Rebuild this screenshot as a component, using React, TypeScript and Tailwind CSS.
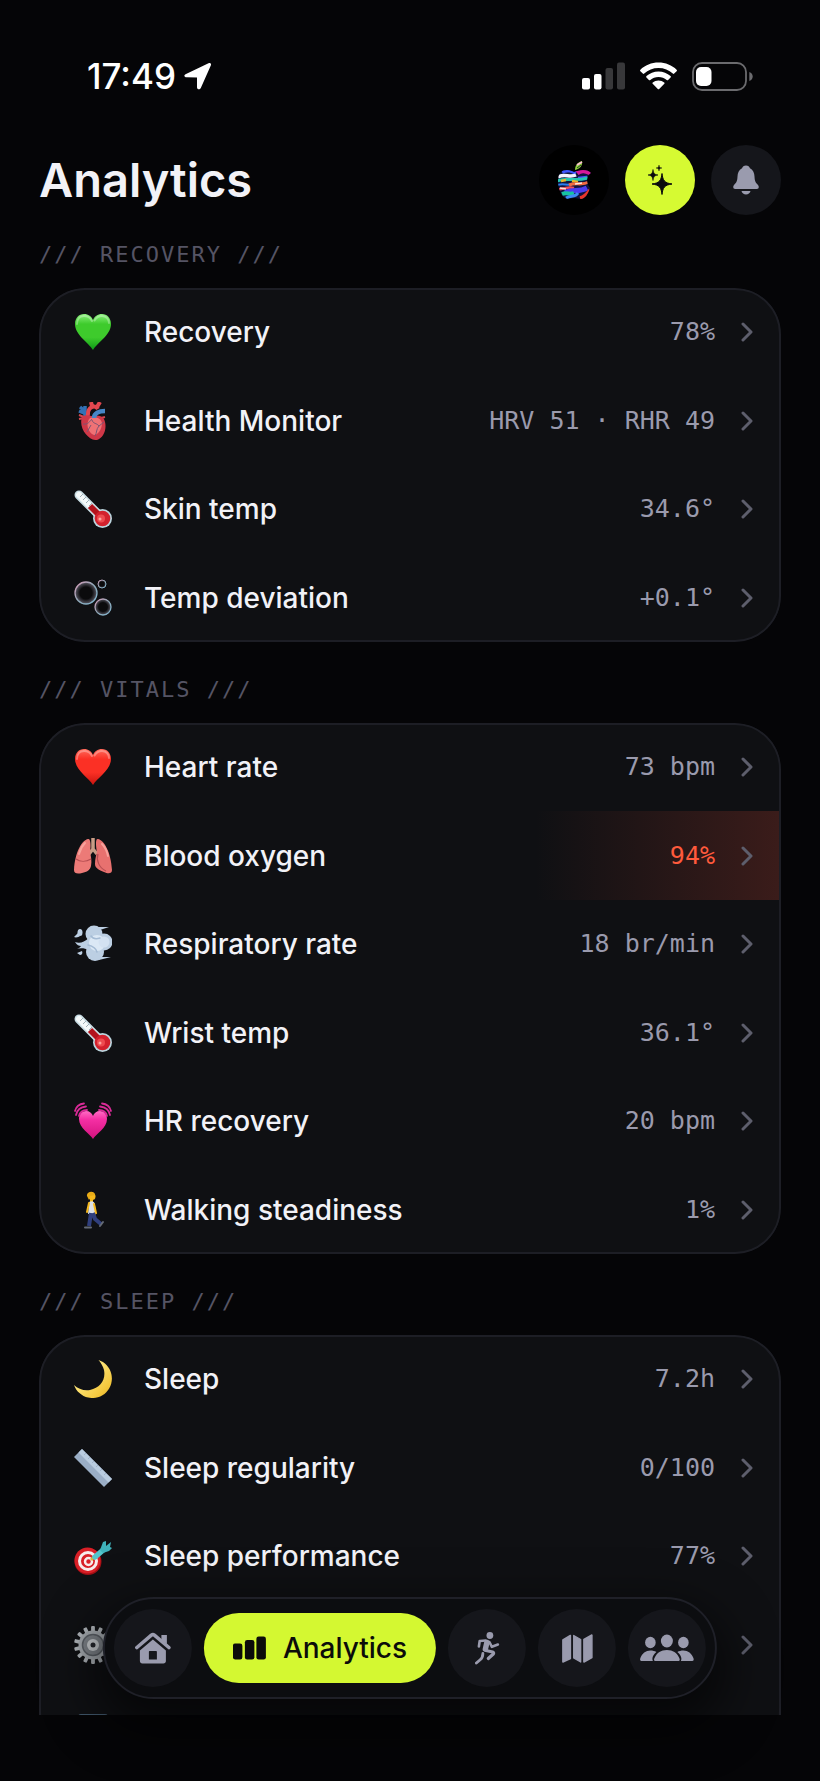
import type { ReactNode } from "react";

interface Metric {
  icon: ReactNode;
  label?: string;
  value?: string;
  alert?: boolean;
}

interface Section {
  title: string;
  metrics: Metric[];
}

const HEART =
  "M19 37C15 30 1 22 1 11C1 5 5 1 10 1c4.500 0 7.500 2.500 9 6c1.500-3.500 4.500-6 9-6c5 0 9 4 9 10c0 11-14 19-18 26z";

function Glyph({ children }: { children: ReactNode }) {
  return (
    <svg viewBox="0 0 38 38" className="size-[38px] shrink-0" aria-hidden="true">
      {children}
    </svg>
  );
}

function HeartIcon({ id, top, mid, low }: { id: string; top: string; mid: string; low: string }) {
  return (
    <Glyph>
      <defs>
        <linearGradient id={id} x1="0" y1="0" x2="0" y2="1">
          <stop offset="0" stopColor={top} />
          <stop offset="0.28" stopColor={mid} />
          <stop offset="0.65" stopColor={mid} />
          <stop offset="1" stopColor={low} />
        </linearGradient>
      </defs>
      <path d={HEART} fill={`url(#${id})`} />
      <path d="M3 11C3 6 6 3 10 3c4 0 6.500 2 8 5" fill="none" stroke="#fff" strokeOpacity="0.3" strokeWidth="2" strokeLinecap="round" />
      <path d="M20.500 7.500C22 5 24.500 3 28 3c4 0 7 3 7 7" fill="none" stroke="#fff" strokeOpacity="0.3" strokeWidth="2" strokeLinecap="round" />
    </Glyph>
  );
}

function AnatomicalHeart() {
  return (
    <Glyph>
      <path d="M11 14V4M6 5l5 4M5 9l5 2" stroke="#3271b5" strokeWidth="3.500" fill="none" />
      <path d="M17 0l1 4M26 0l-3 5M14 14c-1-9 7-12 10-7" stroke="#e2474f" strokeWidth="4" fill="none" />
      <path d="M5 13l5 2M5 17l5-1M31 15l-4 1" stroke="#d5474f" strokeWidth="2" />
      <path d="M8 15c4-4 9 0 12-1c5-1 10 0 11 6c2 8-2 16-8 18C15 39 4 26 8 15z" fill="#cf3848" />
      <path d="M16 16c5-2 11 0 12 5c0 6-4 12-8 12c-6-2-9-12-4-17z" fill="#ef7275" />
      <path d="M20 16c0-5 5-7 11-7" stroke="#4586c6" strokeWidth="4.500" fill="none" />
      <path d="M9 22c5 1 7-3 9-5M18 18c1 4 5 3 7 6M25 24c-3 3-2 7-4 10M25 24l5-4M17 23l-4 7" stroke="#7d5573" strokeWidth="1" fill="none" />
    </Glyph>
  );
}

function Thermometer() {
  return (
    <Glyph>
      <circle cx="28.500" cy="28.500" r="9.500" fill="#bcd5de" />
      <path d="M5 5l21 21" stroke="#c9dde4" strokeWidth="9" strokeLinecap="round" />
      <path d="M5 5l19 19" stroke="#f4f9fa" strokeWidth="6" strokeLinecap="round" />
      <path d="M16 16l10 10" stroke="#b3131d" strokeWidth="6" />
      <circle cx="28.500" cy="28.500" r="7.800" fill="#d3212d" />
      <circle cx="27" cy="28.500" r="4" fill="#ee4b50" />
      <circle cx="26" cy="29" r="1.500" fill="#ffa39e" />
      <path d="M9 4l-3 3M12 7l-3 3M15 10l-3 3M18 13l-3 3" stroke="#9eb0b8" strokeWidth="1" />
    </Glyph>
  );
}

function Bubbles() {
  return (
    <Glyph>
      <defs>
        <linearGradient id="bubbleRim" x1="0" y1="0" x2="1" y2="1">
          <stop offset="0" stopColor="#d99bb8" />
          <stop offset="0.5" stopColor="#8fa9b8" />
          <stop offset="1" stopColor="#7fb6d2" />
        </linearGradient>
        <radialGradient id="bubbleFill">
          <stop offset="0.55" stopColor="#0b0b0d" />
          <stop offset="1" stopColor="#5c5a66" />
        </radialGradient>
      </defs>
      <g fill="url(#bubbleFill)" stroke="url(#bubbleRim)">
        <circle cx="12" cy="14" r="11" strokeWidth="1.300" />
        <circle cx="28" cy="5" r="4" strokeWidth="1" />
        <circle cx="29" cy="28" r="8" strokeWidth="1.300" />
      </g>
    </Glyph>
  );
}

function Lungs() {
  return (
    <Glyph>
      <path d="M19 1v13M19 12l-4 5M19 12l4 5" stroke="#c99c86" strokeWidth="3.500" fill="none" />
      <path d="M14 2C8 3 1 15 0 33c0 4 4 4 8 3c5-1 8-3 9-7c1-5 0-10-1-14c1-5 1-14-2-13z" fill="#ec7a77" />
      <path d="M24 2c6 1 13 13 14 31c0 4-4 4-8 2c-5-2-9-4-9-8c0-5 1-8 2-12c-1-5-2-14 1-13z" fill="#e8716f" />
      <path d="M2 22c4 3 10 3 15 0M24 17c-2 6 1 14 8 17" stroke="#b64e52" strokeWidth="1.200" fill="none" />
      <path d="M11 6c-3 3-5 7-6 11M28 7c3 3 5 7 6 12" stroke="#f7a29c" strokeWidth="2" fill="none" strokeLinecap="round" />
    </Glyph>
  );
}

function Wind() {
  return (
    <Glyph>
      <g fill="#bccfe3">
        <circle cx="20" cy="9" r="8.500" />
        <circle cx="30" cy="17" r="8.500" />
        <circle cx="21" cy="27" r="9" />
        <circle cx="23" cy="18" r="10" />
        <path d="M1 17c5 2 9 0 14-4v12c-5-2-8-2-13-1c4-1 4-2 5-3c-2 0-4-1-6-4z" />
        <ellipse cx="6" cy="7.500" rx="2.500" ry="3.500" />
        <path d="M0 12c2 1 5 0 6-1l-2-3zM3 28l5-2c1 2 0 4-2 4zM22 2h13l-9 3zM24 32h13l-12 3z" />
      </g>
      <circle cx="23" cy="18" r="8" fill="#dbe8f5" />
      <circle cx="30" cy="17" r="5.500" fill="#d3e2f2" />
      <path d="M14 20c4 1 8 3 9 7M17 11c2 3 6 3 9 2" stroke="#a4bbd4" strokeWidth="1.500" fill="none" strokeLinecap="round" />
    </Glyph>
  );
}

function BeatingHeart() {
  return (
    <Glyph>
      <defs>
        <linearGradient id="beat" x1="0" y1="0" x2="0" y2="1">
          <stop offset="0" stopColor="#ff6cc4" />
          <stop offset="0.3" stopColor="#f52fa4" />
          <stop offset="1" stopColor="#d3127d" />
        </linearGradient>
      </defs>
      <path d="M19 37C16 32 5 26 5 17c0-5 3-8 7-8c3.500 0 6 2 7 5c1-3 3.500-5 7-5c4 0 7 3 7 8c0 9-11 15-14 20z" fill="url(#beat)" />
      <g fill="none" stroke="#d92a97" strokeWidth="1.800" strokeLinecap="round">
        <path d="M1 9C2 5 5 2 10 1.500M2 13C3 8 7 5 12 4.500M5 14c1-4 4-6 8-6" />
        <path d="M37 9c-1-4-4-7-9-7.500M36 13c-1-5-5-8-10-8.500M33 14c-1-4-4-6-8-6" />
      </g>
    </Glyph>
  );
}

function Walker() {
  return (
    <Glyph>
      <circle cx="18" cy="5.500" r="3.500" fill="#f5b81c" />
      <path d="M13 5c-1-5 8-6 8-1l-5 1l-1 4z" fill="#e9ab16" />
      <path d="M16 8h3v4h-3z" fill="#f5b81c" />
      <path d="M15 11c3-2 6 0 6 3l1 9h-8z" fill="#dce1e8" />
      <path d="M20 13l2 9-3 2M15 12l-2 9" stroke="#f5b81c" strokeWidth="2" fill="none" strokeLinecap="round" />
      <path d="M17 22l-2 13M19 22l2 6 6 5" stroke="#303f7d" strokeWidth="4" fill="none" strokeLinejoin="round" />
      <path d="M11 36.500h6M26 35l3-4" stroke="#646a75" strokeWidth="2" strokeLinecap="round" />
    </Glyph>
  );
}

function Moon() {
  return (
    <Glyph>
      <defs>
        <linearGradient id="moon" x1="0" y1="0" x2="1" y2="1">
          <stop offset="0.400" stopColor="#fde375" />
          <stop offset="0.800" stopColor="#f3c63a" />
          <stop offset="1" stopColor="#d9a625" />
        </linearGradient>
      </defs>
      <path d="M24.500 0A19.500 19.500 0 1 1 0 25C4 29 10 31 16 30C26 28 32 20 30 10C29 6 27 3 24.500 0z" fill="url(#moon)" />
    </Glyph>
  );
}

function Ruler() {
  return (
    <Glyph>
      <path d="M8 0l30 30-8 8L0 8z" fill="#9aaec6" />
      <path d="M8 0l30 30-3.500 3.500-30-30z" fill="#b9cce0" />
      <path d="M12 4l-2 2M16 8l-2 2M20 12l-2 2M24 16l-2 2M28 20l-2 2M32 24l-2 2" stroke="#8da1ba" strokeWidth="0.600" />
    </Glyph>
  );
}

function Target() {
  return (
    <Glyph>
      <ellipse cx="14" cy="24.500" rx="13.500" ry="13.500" fill="#a10f15" />
      <circle cx="13.500" cy="23.500" r="13" fill="#d91f26" />
      <circle cx="14" cy="24" r="8.500" fill="none" stroke="#f8ecec" strokeWidth="3" />
      <circle cx="14.500" cy="24.500" r="3.500" fill="none" stroke="#f8ecec" strokeWidth="2.500" />
      <path d="M17 23l5-5" stroke="#d8b53b" strokeWidth="3" />
      <path d="M21 20l7-6" stroke="#53c5cb" strokeWidth="5.500" strokeLinecap="round" />
      <path d="M26 13l3-8 3-1 0 5 5-4-1 5 2 1-3 3-6 2z" fill="#3fb2bb" />
    </Glyph>
  );
}

function Gear() {
  const teeth = Array.from({ length: 14 }, (_, i) => (i * 360) / 14);
  return (
    <Glyph>
      {teeth.map((angle) => (
        <rect key={angle} x="17.100" y="0" width="3.800" height="7" rx="1" fill="#aeb3b8" transform={`rotate(${angle} 19 19)`} />
      ))}
      <circle cx="19" cy="19" r="14.500" fill="#a3a8ad" />
      <circle cx="19" cy="19" r="10.500" fill="#7d8288" stroke="#5a5f65" strokeWidth="1.500" />
      <circle cx="19" cy="19" r="6" fill="#c6cacd" />
      <circle cx="19" cy="19" r="2.500" fill="#24262b" />
    </Glyph>
  );
}

function Tile() {
  return (
    <Glyph>
      <rect x="4" y="0" width="30" height="38" rx="3" fill="#3f5568" />
    </Glyph>
  );
}

const sections: Section[] = [
  {
    title: "RECOVERY",
    metrics: [
      { icon: <HeartIcon id="green" top="#8af07c" mid="#3ecb2c" low="#0c9a16" />, label: "Recovery", value: "78%" },
      { icon: <AnatomicalHeart />, label: "Health Monitor", value: "HRV 51 · RHR 49" },
      { icon: <Thermometer />, label: "Skin temp", value: "34.6°" },
      { icon: <Bubbles />, label: "Temp deviation", value: "+0.1°" },
    ],
  },
  {
    title: "VITALS",
    metrics: [
      { icon: <HeartIcon id="red" top="#ff6b5c" mid="#fb3025" low="#c8140f" />, label: "Heart rate", value: "73 bpm" },
      { icon: <Lungs />, label: "Blood oxygen", value: "94%", alert: true },
      { icon: <Wind />, label: "Respiratory rate", value: "18 br/min" },
      { icon: <Thermometer />, label: "Wrist temp", value: "36.1°" },
      { icon: <BeatingHeart />, label: "HR recovery", value: "20 bpm" },
      { icon: <Walker />, label: "Walking steadiness", value: "1%" },
    ],
  },
  {
    title: "SLEEP",
    metrics: [
      { icon: <Moon />, label: "Sleep", value: "7.2h" },
      { icon: <Ruler />, label: "Sleep regularity", value: "0/100" },
      { icon: <Target />, label: "Sleep performance", value: "77%" },
      { icon: <Gear /> },
      { icon: <Tile /> },
    ],
  },
];

function StatusBar() {
  return (
    <div className="flex items-center justify-between pt-[55px] pr-[67px] pb-12 pl-[87px]">
      <div className="flex items-center gap-2">
        <span className="text-[35px] leading-[42px] font-medium text-white">17:49</span>
        <svg viewBox="0 0 28 28" className="size-7 fill-white" aria-hidden="true">
          <path d="M1.500 12.200L24.500 1.200C26.300 0.400 27.600 1.700 26.800 3.500L16.800 26C16 28 13 27.800 13 25.300V15.500L2.700 15.300C0.200 15.300 -0.500 13.200 1.500 12.200z" />
        </svg>
      </div>
      <div className="flex items-center gap-[15px]">
        <svg viewBox="0 0 43 28" className="h-7 w-[43px] fill-white" aria-hidden="true">
          <rect x="0" y="16" width="8" height="11.500" rx="2" />
          <rect x="12" y="12" width="7.500" height="15.500" rx="2" />
          <rect x="23.500" y="6" width="7.500" height="21.500" rx="2" className="fill-[#38383a]" />
          <rect x="35" y="0.500" width="8" height="27" rx="2" className="fill-[#38383a]" />
        </svg>
        <svg viewBox="0 0 37 28" className="h-7 w-[37px] fill-white" aria-hidden="true">
          <path d="M18.500 0.500C11.500 0.500 5 3.200 0.400 7.700c-0.500 0.500-0.500 1 0 1.500l2.400 2.400c0.400 0.400 1 0.400 1.400 0C8 8 13 6 18.500 6s10.500 2 14.300 5.600c0.400 0.400 1 0.400 1.400 0l2.400-2.400c0.500-0.500 0.500-1 0-1.500C32 3.200 25.500 0.500 18.500 0.500z" />
          <path d="M18.500 9.500c-4.600 0-8.800 1.700-12 4.600c-0.500 0.400-0.500 1-0.100 1.400l2.500 2.500c0.400 0.400 1 0.400 1.400 0c2.200-2 5-3.100 8.200-3.100s6 1.100 8.200 3.100c0.400 0.400 1 0.400 1.400 0l2.500-2.500c0.400-0.400 0.400-1-0.100-1.400c-3.200-2.900-7.400-4.600-12-4.600z" />
          <path d="M18.500 18.400c-2.200 0-4.200 0.700-5.700 2c-0.500 0.400-0.500 1-0.100 1.400l5.100 5.200c0.400 0.400 1 0.400 1.400 0l5.100-5.200c0.400-0.400 0.400-1-0.100-1.400c-1.500-1.300-3.500-2-5.700-2z" />
        </svg>
        <svg viewBox="0 0 61 29" className="h-[29px] w-[61px]" aria-hidden="true">
          <rect x="1" y="1" width="53" height="27" rx="9" fill="none" stroke="#6b6b6e" strokeWidth="1.800" />
          <rect x="4" y="5" width="15.500" height="19" rx="5" fill="#fff" />
          <path d="M57.300 10c4.500 1.500 4.500 7.500 0 9z" fill="#6b6b6e" />
        </svg>
      </div>
    </div>
  );
}

function Avatar() {
  return (
    <svg viewBox="0 0 34 38" className="h-[38px] w-[34px]" aria-hidden="true">
      <defs>
        <clipPath id="apple">
          <path d="M17 11c3-1 6-2 9-2c4 0 6 1 8 3c-5 3-5 10-1 15c-2 6-5 11-9 11c-3 0-4-1-7-1s-4 1-6 1C5 38 1 28 1 20C1 12 5 9 10 9c3 0 5 1 7 2z" />
        </clipPath>
      </defs>
      <g clipPath="url(#apple)">
        <path d="M0 6h34v32H0z" fill="#10153f" />
        <path d="M5 11c6-3 10-1 14 1" stroke="#3f55ff" strokeWidth="4" />
        <path d="M20 12c5-4 9-2 14 0" stroke="#d8189a" strokeWidth="5" />
        <path d="M1 16c7-4 11 1 18-2" stroke="#f4f4ff" strokeWidth="3.500" />
        <path d="M21 17l9-1" stroke="#4a52ff" strokeWidth="2.500" />
        <path d="M0 20c9-4 16 1 31-3" stroke="#25c6b0" strokeWidth="3" />
        <path d="M4 20l5-1M15 20l6 1" stroke="#e6b42c" strokeWidth="2.500" />
        <path d="M0 24c7-2 10 1 16-1" stroke="#2b7df0" strokeWidth="2" />
        <path d="M12 24c7-3 12 1 20-3" stroke="#f36b41" strokeWidth="3" />
        <path d="M0 28c6 1 10-3 17-1" stroke="#ef4e5b" strokeWidth="2.500" />
        <path d="M3 27l6 1M18 23l7-1" stroke="#ffe4dc" strokeWidth="1.500" />
        <path d="M8 32c8-5 13 0 22-5" stroke="#4b3cf0" strokeWidth="5" />
        <path d="M5 33c5-2 8 1 12-1" stroke="#16c3a2" strokeWidth="4" />
        <path d="M9 37c5-3 9 0 12-5" stroke="#3b8cf5" strokeWidth="3" />
        <path d="M23 37c4-1 7-4 10-8" stroke="#e7352c" strokeWidth="3.500" />
      </g>
      <path d="M18 9c0-5 3-8 7-9c1 4-2 8-7 9z" fill="#8fd03c" />
      <path d="M20 4l5-3" stroke="#ffb8dd" strokeWidth="1.500" />
      <path d="M20 7l4-3" stroke="#1e3f20" strokeWidth="1" />
    </svg>
  );
}

function Header() {
  return (
    <header className="flex items-center justify-between px-[39px]">
      <h1 className="text-[47px] leading-[60px] font-semibold text-[#f2f2f7]">Analytics</h1>
      <div className="flex gap-4">
        <button type="button" aria-label="Profile" className="flex size-[70px] items-center justify-center rounded-full bg-black">
          <Avatar />
        </button>
        <button type="button" aria-label="Insights" className="flex size-[70px] items-center justify-center rounded-full bg-[#d6fa32]">
          <svg viewBox="0 0 24 30" className="h-[30px] w-6 fill-[#0a0b0d]" aria-hidden="true">
            <path d="M14 8.500C14.800 15.500 16.500 18 24 19C16.500 20 14.800 22.500 14 29.500C13.200 22.500 11.500 20 4 19C11.500 18 13.200 15.500 14 8.500z" stroke="#0a0b0d" strokeWidth="1" strokeLinejoin="round" />
            <path d="M5 4.500C5.500 8.500 6.500 9.500 10 10C6.500 10.500 5.500 11.500 5 15.500C4.500 11.500 3.500 10.500 0 10C3.500 9.500 4.500 8.500 5 4.500z" stroke="#0a0b0d" strokeWidth="0.600" />
            <path d="M11 0C11.300 2.200 11.700 2.700 14 3C11.700 3.300 11.300 3.800 11 6C10.700 3.800 10.300 3.300 8 3C10.300 2.700 10.700 2.200 11 0z" stroke="#0a0b0d" strokeWidth="0.400" />
          </svg>
        </button>
        <button type="button" aria-label="Notifications" className="flex size-[70px] items-center justify-center rounded-full bg-[#15161b]">
          <svg viewBox="0 0 26 30" className="h-[30px] w-[26px] fill-[#9a9bae]" aria-hidden="true">
            <path d="M13 0.500C10.800 0.500 9.600 1.800 9 3.200C5.800 4.800 4.600 8 4.500 11.500C4.300 16 3.500 17.500 1 20C-0.300 21.500 0 24 2.200 24H23.800C26 24 26.300 21.500 25 20C22.500 17.500 21.700 16 21.500 11.500C21.400 8 20.200 4.800 17 3.200C16.400 1.800 15.200 0.500 13 0.500z" />
            <path d="M8.500 26h9c-0.500 2.200-2.300 3.500-4.500 3.500s-4-1.300-4.500-3.500z" />
          </svg>
        </button>
      </div>
    </header>
  );
}

function MetricRow({ icon, label, value, alert }: Metric) {
  return (
    <li className="h-[88px] even:h-[89px]">
      <a
        href="#"
        className={
          alert
            ? "flex h-full items-center bg-linear-to-r from-transparent from-67% to-[#3b1c1a] pr-7 pl-[35px]"
            : "flex h-full items-center pr-7 pl-[35px]"
        }
      >
        {icon}
        <span className="ml-8 text-[28px] leading-9 font-medium text-[#f2f2f7]">{label}</span>
        <span
          className={
            alert
              ? "ml-auto font-['DejaVu_Sans_Mono',monospace] text-[25px] leading-8 text-[#ff5a3c]"
              : "ml-auto font-['DejaVu_Sans_Mono',monospace] text-[25px] leading-8 text-[#9a9aad]"
          }
        >
          {value}
        </span>
        <svg viewBox="0 0 12 20" className="ml-[26px] h-5 w-3 fill-none stroke-[#5d5e6c]" aria-hidden="true">
          <path d="M2 2l8 8-8 8" strokeWidth="3" strokeLinecap="round" strokeLinejoin="round" />
        </svg>
      </a>
    </li>
  );
}

function MetricSection({ title, metrics }: Section) {
  return (
    <section>
      <h2 className="pb-[21px] font-['DejaVu_Sans_Mono',monospace] text-[22px] leading-6 tracking-[2px] text-[#555464]">
        /// {title} ///
      </h2>
      <ul className="relative overflow-hidden rounded-[46px] bg-[#0f1013] after:pointer-events-none after:absolute after:inset-0 after:rounded-[46px] after:border-2 after:border-[#1d1e25]">
        {metrics.map((metric, i) => (
          <MetricRow key={i} {...metric} />
        ))}
      </ul>
    </section>
  );
}

function NavButton({ label, children }: { label: string; children: ReactNode }) {
  return (
    <button
      type="button"
      aria-label={label}
      className="flex size-[78px] items-center justify-center rounded-full bg-[#15161b] text-[#9a9bae]"
    >
      {children}
    </button>
  );
}

function BottomNav() {
  return (
    <nav className="absolute bottom-[82px] left-1/2 flex -translate-x-1/2 items-center gap-3 rounded-full border-2 border-[#1f2028] bg-[#0c0d10] px-[9px] py-[10px] shadow-[0_20px_50px_10px_rgba(0,0,0,0.6)]">
      <NavButton label="Home">
        <svg viewBox="0 0 36 32" className="h-8 w-9" fill="currentColor" aria-hidden="true">
          <path d="M26.500 3h5.500v9l-5.500-4z" />
          <path d="M2 15.500L16.500 3.200c1-0.800 2-0.800 3 0L34 15.500" fill="none" stroke="currentColor" strokeWidth="3.600" strokeLinecap="round" strokeLinejoin="round" />
          <path d="M18 7.500L31 18.500V29c0 1.500-1 2.500-2.500 2.500h-21C6 31.500 5 30.500 5 29V18.500zM14 20v7.500h8V20c0-0.600-0.400-1-1-1h-6c-0.600 0-1 0.400-1 1z" fillRule="evenodd" />
        </svg>
      </NavButton>
      <button
        type="button"
        aria-current="page"
        className="flex h-[70px] items-center gap-[17px] rounded-full bg-[#d4f831] px-[29px] text-[28px] leading-9 font-medium text-[#0b0c0a]"
      >
        <svg viewBox="0 0 33 24" className="h-6 w-[33px]" fill="currentColor" aria-hidden="true">
          <rect x="0" y="7.500" width="9.500" height="16" rx="2.300" />
          <rect x="12" y="4" width="9.500" height="19.500" rx="2.300" />
          <rect x="23.500" y="0.500" width="9.500" height="23" rx="2.300" />
        </svg>
        Analytics
      </button>
      <NavButton label="Activity">
        <svg viewBox="0 0 25 33" className="h-[33px] w-[25px]" fill="none" stroke="currentColor" strokeLinecap="round" strokeLinejoin="round" aria-hidden="true">
          <circle cx="15" cy="3.500" r="3.400" fill="currentColor" stroke="none" />
          <path d="M4 14.500l0.800-5.500 6-0.500M14.500 10l2.500 4.800 6-2.300" strokeWidth="2.600" />
          <path d="M12 10.500l-1.500 6.500" strokeWidth="5.500" />
          <path d="M11 18.500l6.800 1.500c1 0.300 1.200 1.200 0.600 2l-5 4.500" strokeWidth="3.200" />
          <path d="M8 21.500c0 3-1 5-3 6.500l-3.500 3" strokeWidth="2.800" />
        </svg>
      </NavButton>
      <NavButton label="Map">
        <svg viewBox="0 0 31 29" className="h-[29px] w-[31px]" fill="currentColor" stroke="currentColor" strokeLinejoin="round" aria-hidden="true">
          <path d="M1 6l7.500-4.500v23L1 28z" strokeWidth="1.500" />
          <path d="M11.800 1.500l7 4V28l-7-4z" strokeWidth="1.300" />
          <path d="M22 5.500L30 1v22.500L22 28z" strokeWidth="1.500" />
        </svg>
      </NavButton>
      <NavButton label="Friends">
        <svg viewBox="0 0 54 28" className="h-7 w-[54px]" fill="currentColor" aria-hidden="true">
          <ellipse cx="10.500" cy="8.500" rx="5.300" ry="5.800" />
          <ellipse cx="43.500" cy="8.500" rx="5.300" ry="5.800" />
          <ellipse cx="27" cy="7" rx="6" ry="6.500" />
          <path d="M15 27c-1.300-0.700-1-2 0-3.800C17 19 21 16 27 16s10 3 12 7.200c1 1.800 1.300 3.100 0 3.800z" />
          <path d="M13 27H1.500C0 27 0 25.500 0.500 24C2 19.500 6 16.500 10.500 16.500c2.300 0 4.300 0.500 6 1.500C13.500 20.500 11.500 24 13 27zM41 27h11.500c1.500 0 1.500-1.500 1-3c-1.500-4.500-5.500-7.500-10-7.500c-2.300 0-4.300 0.500-6 1.500c3 2.500 5 6 3.500 9z" />
        </svg>
      </NavButton>
    </nav>
  );
}

export default function App() {
  return (
    <div className="relative flex h-screen flex-col overflow-hidden bg-[#050507] font-['Inter',sans-serif]">
      <StatusBar />
      <Header />
      <main className="mt-7 mb-[66px] flex min-h-0 flex-1 flex-col gap-9 overflow-y-auto px-[39px] [scrollbar-width:none] *:shrink-0">
        {sections.map((section) => (
          <MetricSection key={section.title} {...section} />
        ))}
      </main>
      <BottomNav />
    </div>
  );
}
